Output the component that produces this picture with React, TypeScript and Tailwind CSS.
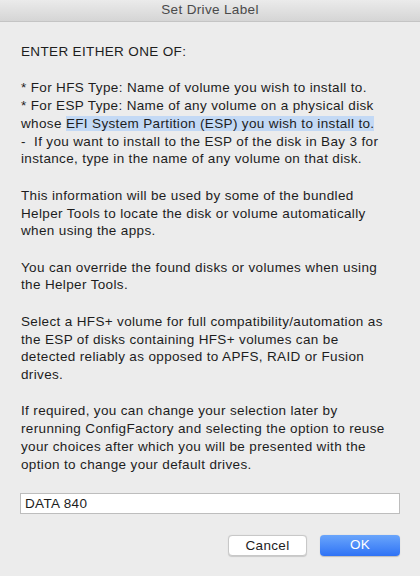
import { useState } from "react";

const font = { fontFamily: '"Liberation Sans", Arial, sans-serif' };

const paragraphs: string[][] = [
  ["ENTER EITHER ONE OF:"],
  [
    "* For HFS Type: Name of volume you wish to install to.",
    "* For ESP Type: Name of any volume on a physical disk",
    "__HIGHLIGHT__",
    "-  If you want to install to the ESP of the disk in Bay 3 for",
    "instance, type in the name of any volume on that disk.",
  ],
  [
    "This information will be used by some of the bundled",
    "Helper Tools to locate the disk or volume automatically",
    "when using the apps.",
  ],
  ["You can override the found disks or volumes when using", "the Helper Tools."],
  [
    "Select a HFS+ volume for full compatibility/automation as",
    "the ESP of disks containing HFS+ volumes can be",
    "detected reliably as opposed to APFS, RAID or Fusion",
    "drives.",
  ],
  [
    "If required, you can change your selection later by",
    "rerunning ConfigFactory and selecting the option to reuse",
    "your choices after which you will be presented with the",
    "option to change your default drives.",
  ],
];

export default function App() {
  const [label, setLabel] = useState("DATA 840");

  return (
    <div className="w-[420px] h-[576px] overflow-hidden bg-[#ececec] text-[#1d1d1d] flex flex-col" style={font}>
      {/* title bar */}
      <div className="h-[22px] shrink-0 flex items-center justify-center border-b border-[#c4c4c4] bg-gradient-to-b from-[#ebebeb] to-[#d5d5d5] text-[13.5px] tracking-[0.35px] text-[#4a4a4a]">
        Set Drive Label
      </div>

      {/* message */}
      <div className="px-[21px] pt-[21px] text-[13.5px] tracking-[0.35px] leading-[17.8px] whitespace-pre">
        {paragraphs.map((lines, i) => (
          <div key={i} className={i === 0 ? "" : "mt-[18.5px]"}>
            {lines.map((line, j) =>
              line === "__HIGHLIGHT__" ? (
                <div key={j}>
                  whose <span className="bg-[#c3d9f5]">EFI System Partition (ESP) you wish to install to.</span>
                </div>
              ) : (
                <div key={j}>{line}</div>
              )
            )}
          </div>
        ))}
      </div>

      {/* field */}
      <div className="px-[20px] mt-[17px]">
        <input
          className="w-full h-[21px] border border-[#bdbdbd] bg-white px-[4px] text-[13.5px] tracking-[0.35px] text-[#1d1d1d] outline-none"
          style={font}
          value={label}
          onChange={(e) => setLabel(e.target.value)}
        />
      </div>

      {/* buttons */}
      <div className="flex justify-end gap-[13px] px-[20px] mt-[20px]">
        <button className="w-[79px] h-[21px] rounded-[4px] border border-[#c8c8c8] bg-white text-[13.5px] tracking-[0.35px] text-[#1d1d1d] shadow-[0_0.5px_1px_rgba(0,0,0,0.15)]">
          Cancel
        </button>
        <button className="w-[80px] h-[21px] rounded-[4px] bg-gradient-to-b from-[#6aa5fb] to-[#2f72f5] text-[13.5px] tracking-[0.35px] text-white shadow-[0_0.5px_1px_rgba(0,0,0,0.2)]">
          OK
        </button>
      </div>
    </div>
  );
}
